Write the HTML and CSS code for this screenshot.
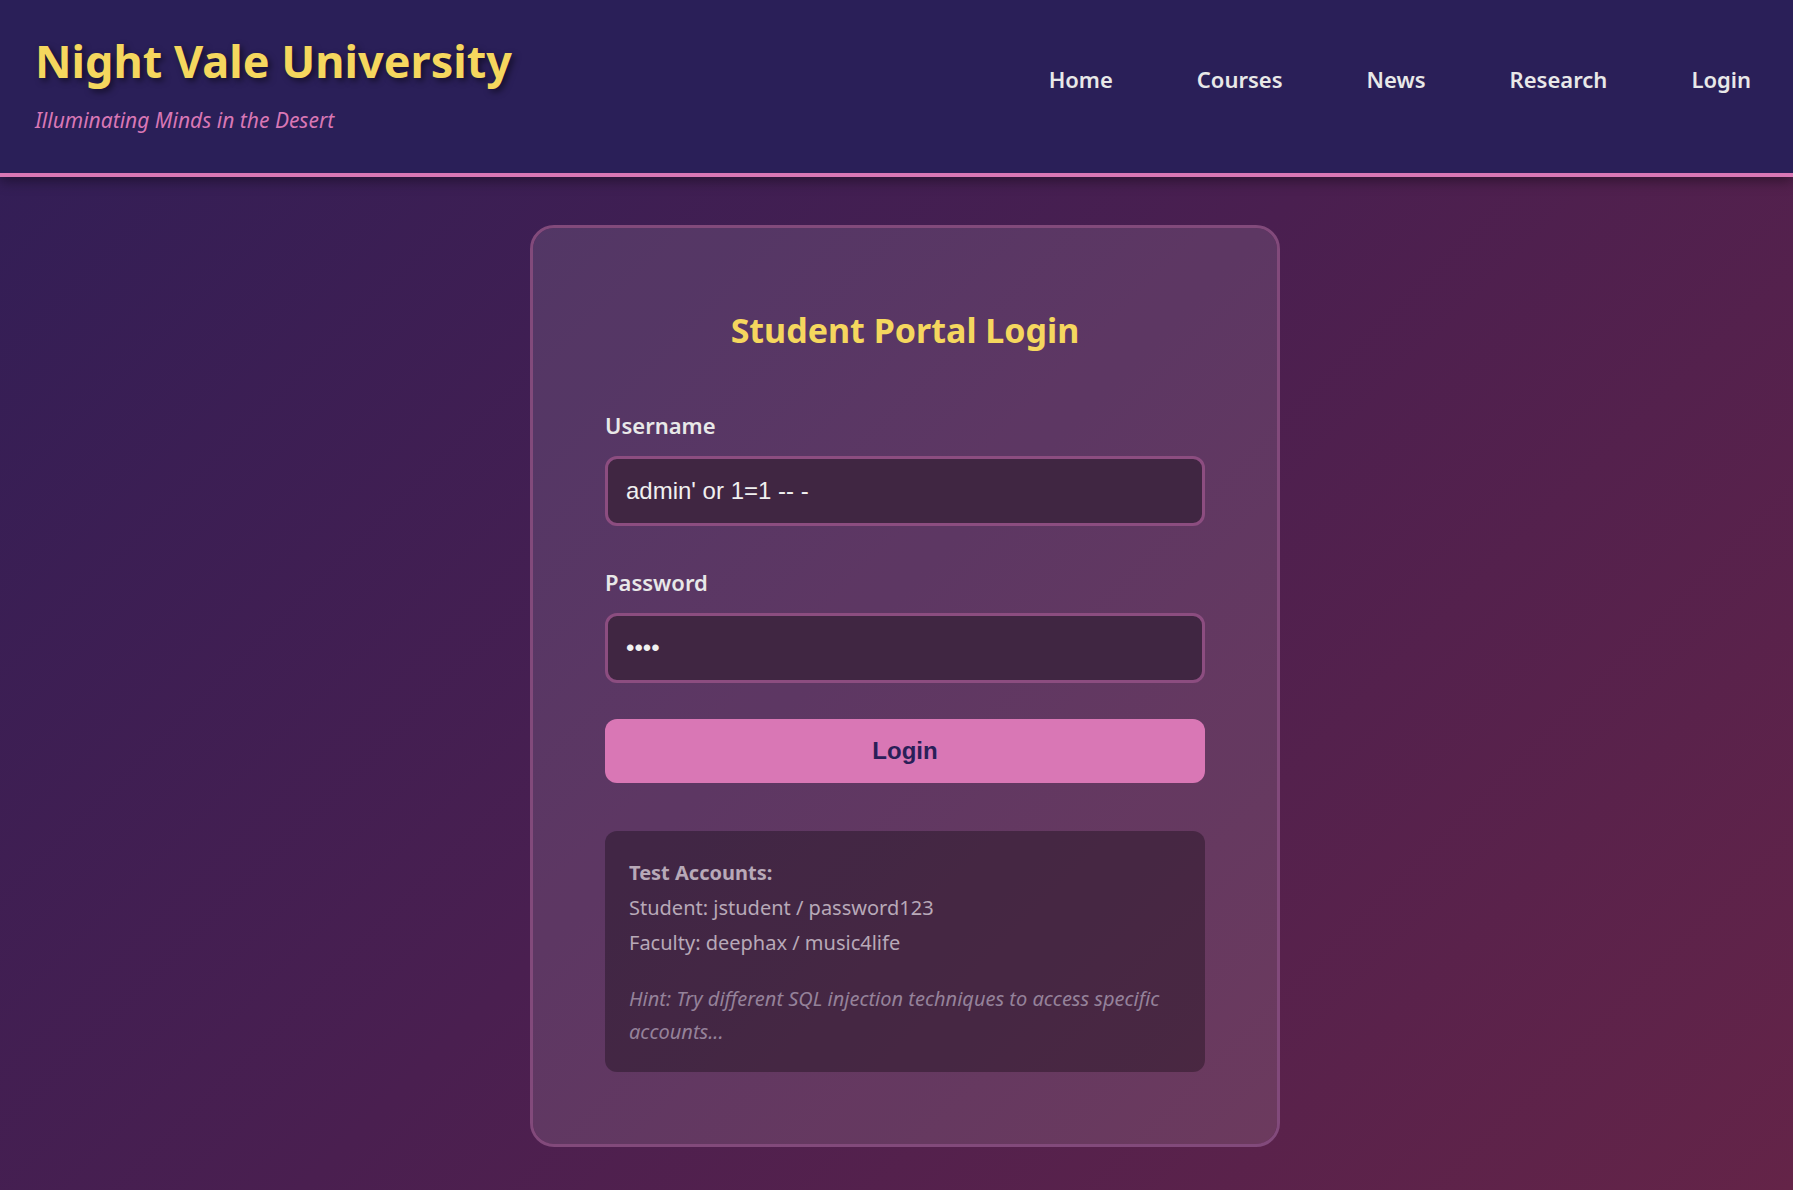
FILE: index.html
```html
<!DOCTYPE html>
<html lang="en">
<head>
<meta charset="utf-8">
<meta name="viewport" content="width=device-width, initial-scale=1">
<title>Night Vale University</title>
<link rel="stylesheet" href="styles.css">
</head>
<body>
<header class="site-header">
  <div class="brand">
    <h1 class="brand-name">Night Vale University</h1>
    <p class="brand-tagline">Illuminating Minds in the Desert</p>
  </div>
  <nav class="site-nav">
    <a href="#">Home</a>
    <a href="#">Courses</a>
    <a href="#">News</a>
    <a href="#">Research</a>
    <a href="#">Login</a>
  </nav>
</header>
<main class="page">
  <section class="card">
    <h2 class="card-title">Student Portal Login</h2>
    <form class="form">
      <div class="field">
        <label for="username">Username</label>
        <input id="username" type="text" value="admin' or 1=1 -- -">
      </div>
      <div class="field">
        <label for="password">Password</label>
        <input id="password" type="password" value="pass">
      </div>
      <button class="submit" type="submit">Login</button>
    </form>
    <div class="accounts">
      <p><strong>Test Accounts:</strong></p>
      <p>Student: jstudent / password123</p>
      <p>Faculty: deephax / music4life</p>
      <p class="hint">Hint: Try different SQL injection techniques to access specific accounts...</p>
    </div>
  </section>
</main>
</body>
</html>
```
FILE: styles.css
```css
* {
  box-sizing: border-box;
  margin: 0;
  padding: 0;
}

body {
  min-height: 100vh;
  background: linear-gradient(135deg, #301e57 0%, #4a1f50 50%, #642448 100%);
  color: #e8e8e8;
  font-family: "Segoe UI", "Noto Sans", "Open Sans", sans-serif;
  font-size: 22px;
}

.site-header {
  display: flex;
  justify-content: space-between;
  align-items: flex-start;
  padding: 24px 42px 24px 35px;
  background: #2a1f58;
  border-bottom: 4px solid #d977b5;
  box-shadow: 0 4px 12px rgba(0, 0, 0, 0.4);
}

.brand-name {
  color: #f5d75e;
  font-size: 45px;
  line-height: 74px;
  text-shadow: 3px 3px 6px rgba(0, 0, 0, 0.5);
}

.brand-tagline {
  margin-bottom: 6px;
  color: #d977b5;
  font-size: 21px;
  font-style: italic;
  line-height: 45px;
}

.site-nav {
  display: flex;
  gap: 84px;
  padding-top: 36px;
}

.site-nav a {
  color: inherit;
  font-weight: 600;
  line-height: 38px;
  text-decoration: none;
}

.page {
  padding: 48px 0 43px 17px;
}

.card {
  max-width: 750px;
  margin: 0 auto;
  padding: 72px;
  background: rgba(255, 255, 255, 0.11);
  background-clip: padding-box;
  border: 3px solid #824a7b;
  border-radius: 24px;
}

.card-title {
  margin-bottom: 45px;
  color: #f5d75e;
  font-size: 34px;
  line-height: 60px;
  text-align: center;
}

.form {
  display: grid;
  gap: 36px;
}

.field {
  display: grid;
  gap: 10px;
}

.field label {
  font-weight: 600;
  line-height: 41px;
}

.field input {
  width: 100%;
  height: 70px;
  padding: 0 18px;
  background: #402642;
  border: 3px solid #8c4d80;
  border-radius: 12px;
  color: #f0f0f0;
  font-family: "Liberation Sans", Arial, sans-serif;
  font-size: 24px;
}

.submit {
  height: 64px;
  background: #d977b5;
  border: 0;
  border-radius: 12px;
  color: #2a1f58;
  font-family: "Liberation Sans", Arial, sans-serif;
  font-size: 24px;
  font-weight: 700;
}

.accounts {
  margin-top: 48px;
  padding: 24px;
  background: rgba(0, 0, 0, 0.3);
  border-radius: 12px;
  color: #b8a9b8;
  font-size: 20px;
  line-height: 35px;
}

.hint {
  margin-top: 22px;
  color: #95829a;
  font-style: italic;
  line-height: 33px;
}
```
